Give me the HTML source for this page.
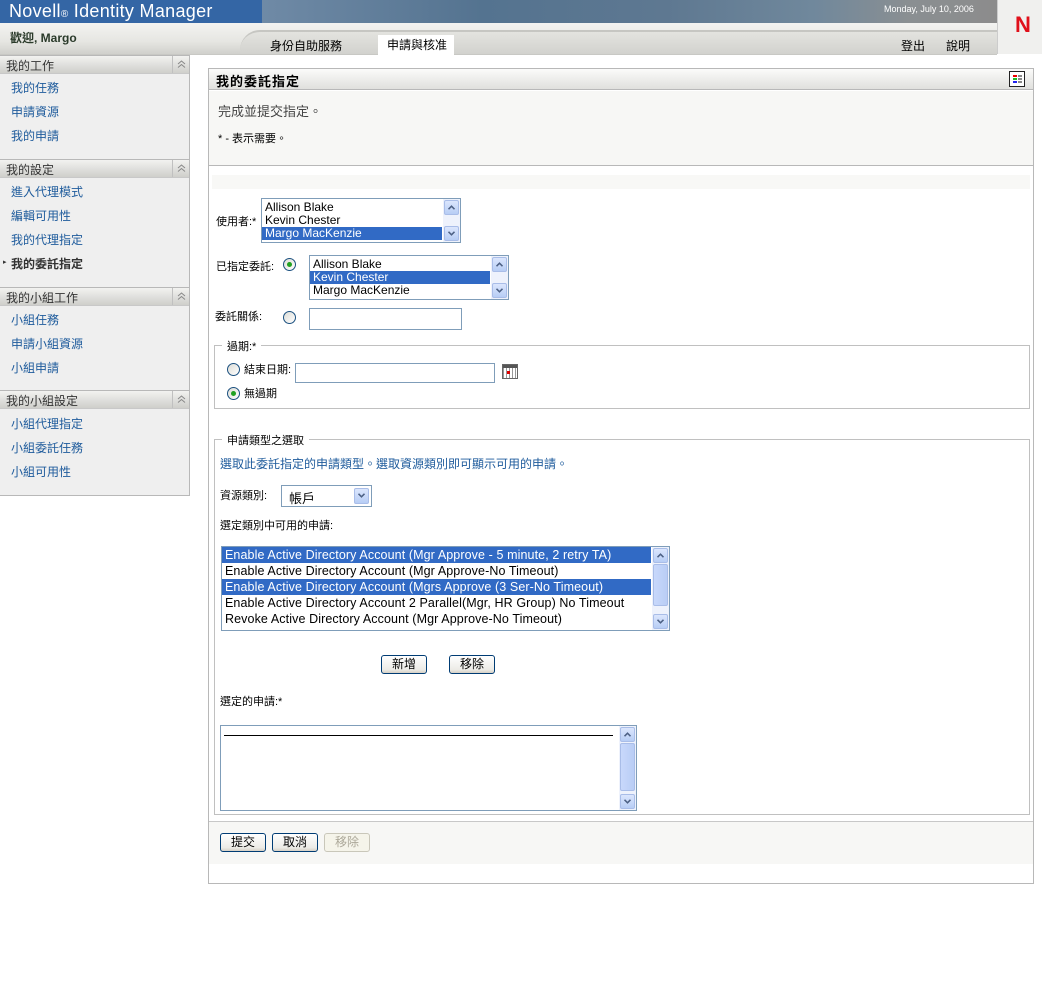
<!DOCTYPE html>
<html><head><meta charset="utf-8">
<style>
*{box-sizing:border-box;margin:0;padding:0}
body{width:1042px;height:1002px;background:#fff;position:relative;overflow:hidden;font-family:"Liberation Sans","Noto Sans CJK TC",sans-serif;font-size:12px;color:#000}
.a{position:absolute}
.sh{position:absolute;left:0;width:189px;height:19px;background:linear-gradient(#f2f2f0,#cfcfcb);border-top:1px solid #b8b8b8;border-bottom:1px solid #c8c8c8;font-size:12px;color:#333;padding:1px 0 0 6px}
.sh .c{position:absolute;right:0;top:0;width:17px;height:17px;border-left:1px solid #c0c0c0}
.si{position:absolute;left:11px;color:#1e5b9c;font-size:12px}
.lb{position:absolute;background:#fff;border:1px solid #7f9db9;overflow:hidden;font-size:12px}
.lb .r{height:13px;line-height:13px;padding-left:3px;white-space:nowrap}
.sel{background:#316ac5;color:#fff}
.sb{position:absolute;right:0;top:0;bottom:0;width:17px;background:#eef2fc}
.ar{position:absolute;left:1px;width:15px;height:15px;background:linear-gradient(#dbe6fd,#b7cdf5);border:1px solid #a9bde8;border-radius:2px}
.ar svg{position:absolute;left:3px;top:4px}
.th{position:absolute;left:1px;width:15px;background:linear-gradient(90deg,#c8d8fb,#b9cdf5);border:1px solid #a9bde8;border-radius:2px}
.rad{position:absolute;width:13px;height:13px;border-radius:50%;border:1px solid #1c5180;background:linear-gradient(135deg,#dcdcd6,#fff)}
.rad.on::after{content:"";position:absolute;left:3px;top:3px;width:5px;height:5px;border-radius:50%;background:#21a121}
.inp{position:absolute;border:1px solid #7f9db9;background:#fff}
.btn{position:absolute;height:19px;border:1px solid #003c74;border-radius:3px;background:linear-gradient(#fff,#ecebe6 80%,#d6d0c5);font-size:12px;text-align:center;line-height:17px}
.lg{position:absolute;background:#fff;padding:0 5px;font-size:11px}
</style></head><body>
<svg width="0" height="0" style="position:absolute">
<defs>
<symbol id="up" viewBox="0 0 7 5"><path d="M0.5 4.2 L3.5 1.2 L6.5 4.2" fill="none" stroke="#4d6185" stroke-width="1.6"/></symbol>
<symbol id="dn" viewBox="0 0 7 5"><path d="M0.5 0.8 L3.5 3.8 L6.5 0.8" fill="none" stroke="#4d6185" stroke-width="1.6"/></symbol>
<symbol id="dup" viewBox="0 0 9 8"><path d="M1 4 L4.5 1 L8 4 M1 7.5 L4.5 4.5 L8 7.5" fill="none" stroke="#888" stroke-width="1"/></symbol>
</defs></svg>

<!-- header -->
<div class="a" style="left:0;top:0;width:262px;height:23px;background:#3466a5"></div>
<div class="a" style="left:262px;top:0;width:735px;height:23px;background:linear-gradient(90deg,#6f8aa6 0%,#547390 30%,#5e7891 55%,#70889c 75%,#8a8f92 88%,#8c8c8c 100%)"></div>
<div class="a" style="left:9px;top:1px;color:#fff;font-size:18px;letter-spacing:.3px">Novell<span style="font-size:10px">®</span> Identity Manager</div>
<div class="a" style="left:884px;top:4px;color:#fff;font-size:9px">Monday, July 10, 2006</div>
<div class="a" style="left:997px;top:0;width:45px;height:54px;background:#f0f0ee;border-left:1px solid #ccc"></div>
<div class="a" style="left:1015px;top:12px;color:#e0101a;font-size:22px;font-weight:bold">N</div>
<div class="a" style="left:0;top:23px;width:997px;height:31px;background:linear-gradient(#f3f3f1,#e6e6e2 60%,#d0d0cc)"></div>
<div class="a" style="left:240px;top:30px;width:757px;height:24px;background:linear-gradient(#e3e3df,#d2d2ce);border-top:2px solid #c6c6c2;border-radius:20px 0 0 0"></div>
<div class="a" style="left:0;top:54px;width:997px;height:1px;background:#c8c8c4"></div>
<div class="a" style="left:10px;top:29px;font-weight:bold;color:#2a3a2a;font-size:12px">歡迎, Margo</div>
<div class="a" style="left:270px;top:37px;font-size:12px">身份自助服務</div>
<div class="a" style="left:378px;top:35px;width:76px;height:20px;background:#fff"></div>
<div class="a" style="left:387px;top:36px;font-size:12px">申請與核准</div>
<div class="a" style="left:901px;top:37px;font-size:12px">登出</div>
<div class="a" style="left:946px;top:37px;font-size:12px">說明</div>

<!-- sidebar -->
<div class="a" style="left:0;top:55px;width:190px;height:441px;background:#efefef;border-right:1px solid #b8b8b8;border-bottom:1px solid #b8b8b8"></div>
<div class="sh" style="top:55px">我的工作<span class="c"><svg class="a" style="left:4px;top:4px" width="9" height="8"><use href="#dup"/></svg></span></div>
<div class="si" style="top:79px">我的任務</div>
<div class="si" style="top:103px">申請資源</div>
<div class="si" style="top:127px">我的申請</div>
<div class="sh" style="top:159px">我的設定<span class="c"><svg class="a" style="left:4px;top:4px" width="9" height="8"><use href="#dup"/></svg></span></div>
<div class="si" style="top:183px">進入代理模式</div>
<div class="si" style="top:207px">編輯可用性</div>
<div class="si" style="top:231px">我的代理指定</div>
<div class="si" style="top:255px;color:#333;font-weight:bold"><span style="position:absolute;left:-8px;font-size:7px;top:3px;font-weight:normal">▸</span>我的委託指定</div>
<div class="sh" style="top:287px">我的小組工作<span class="c"><svg class="a" style="left:4px;top:4px" width="9" height="8"><use href="#dup"/></svg></span></div>
<div class="si" style="top:311px">小組任務</div>
<div class="si" style="top:335px">申請小組資源</div>
<div class="si" style="top:359px">小組申請</div>
<div class="sh" style="top:390px">我的小組設定<span class="c"><svg class="a" style="left:4px;top:4px" width="9" height="8"><use href="#dup"/></svg></span></div>
<div class="si" style="top:415px">小組代理指定</div>
<div class="si" style="top:439px">小組委託任務</div>
<div class="si" style="top:463px">小組可用性</div>

<!-- main panel -->
<div class="a" style="left:208px;top:68px;width:826px;height:816px;border:1px solid #b8b8b8;background:#fff"></div>
<div class="a" style="left:209px;top:69px;width:824px;height:21px;background:linear-gradient(#fbfbfa,#e0e0dd);border-bottom:1px solid #b8b8b8"></div>
<div class="a" style="left:216px;top:71px;font-weight:bold;font-size:13px;letter-spacing:1px">我的委託指定</div>
<div class="a" style="left:1009px;top:71px;width:16px;height:16px;border:1px solid #222;background:#fff">
 <div class="a" style="left:3px;top:3px;width:4px;height:2px;background:#e00"></div><div class="a" style="left:8px;top:3px;width:4px;height:2px;background:#888"></div>
 <div class="a" style="left:3px;top:6px;width:4px;height:2px;background:#2b2"></div><div class="a" style="left:8px;top:6px;width:4px;height:2px;background:#888"></div>
 <div class="a" style="left:3px;top:9px;width:4px;height:2px;background:#22e"></div><div class="a" style="left:8px;top:9px;width:4px;height:2px;background:#888"></div>
</div>
<div class="a" style="left:209px;top:91px;width:824px;height:75px;background:#f7f7f5;border-bottom:1px solid #b8b8b8"></div>
<div class="a" style="left:218px;top:101px;font-size:13px;color:#444">完成並提交指定。</div>
<div class="a" style="left:218px;top:130px;font-size:11px">* - 表示需要。</div>
<div class="a" style="left:212px;top:175px;width:818px;height:14px;background:#f8f8f6"></div>

<!-- users -->
<div class="a" style="left:216px;top:213px;font-size:11px">使用者:*</div>
<div class="lb" style="left:261px;top:198px;width:200px;height:45px">
 <div class="r" style="margin-top:2px">Allison Blake</div><div class="r">Kevin Chester</div><div class="r sel" style="margin-right:18px">Margo MacKenzie</div>
 <div class="sb"><div class="ar" style="top:1px"><svg width="7" height="5"><use href="#up"/></svg></div><div class="ar" style="bottom:1px"><svg width="7" height="5"><use href="#dn"/></svg></div></div>
</div>
<div class="a" style="left:216px;top:258px;font-size:11px">已指定委託:</div>
<div class="rad on" style="left:283px;top:258px"></div>
<div class="lb" style="left:309px;top:255px;width:200px;height:45px">
 <div class="r" style="margin-top:2px">Allison Blake</div><div class="r sel" style="margin-right:18px">Kevin Chester</div><div class="r">Margo MacKenzie</div>
 <div class="sb"><div class="ar" style="top:1px"><svg width="7" height="5"><use href="#up"/></svg></div><div class="ar" style="bottom:1px"><svg width="7" height="5"><use href="#dn"/></svg></div></div>
</div>
<div class="a" style="left:215px;top:308px;font-size:11px">委託關係:</div>
<div class="rad" style="left:283px;top:311px"></div>
<div class="inp" style="left:309px;top:308px;width:153px;height:22px"></div>

<!-- expiry -->
<div class="a" style="left:214px;top:345px;width:816px;height:64px;border:1px solid #c0c0c0"></div>
<div class="lg" style="left:222px;top:338px">過期:*</div>
<div class="rad" style="left:227px;top:363px"></div>
<div class="a" style="left:244px;top:361px;font-size:11px">結束日期:</div>
<div class="inp" style="left:295px;top:363px;width:200px;height:20px"></div>
<div class="a" style="left:502px;top:364px;width:16px;height:15px;border:1px solid #666;background:repeating-linear-gradient(90deg,#999 0 1px,#fff 1px 3px),#fff">
 <div class="a" style="left:0;top:0;width:14px;height:3px;background:#555"></div>
 <div class="a" style="left:4px;top:6px;width:3px;height:3px;background:#d00"></div></div>
<div class="rad on" style="left:227px;top:387px"></div>
<div class="a" style="left:244px;top:385px;font-size:11px">無過期</div>

<!-- request types -->
<div class="a" style="left:214px;top:439px;width:816px;height:376px;border:1px solid #c0c0c0"></div>
<div class="lg" style="left:222px;top:432px">申請類型之選取</div>
<div class="a" style="left:220px;top:455px;color:#1e5b9c;font-size:12px">選取此委託指定的申請類型。選取資源類別即可顯示可用的申請。</div>
<div class="a" style="left:220px;top:487px;font-size:11px">資源類別:</div>
<div class="inp" style="left:281px;top:485px;width:91px;height:22px"><span class="a" style="left:7px;top:2px;font-size:13px">帳戶</span>
 <div class="ar" style="left:72px;top:2px;height:16px"><svg width="7" height="5"><use href="#dn"/></svg></div></div>
<div class="a" style="left:220px;top:517px;font-size:11px">選定類別中可用的申請:</div>
<div class="lb" style="left:221px;top:546px;width:449px;height:85px;font-size:12.5px;letter-spacing:.1px">
 <div class="r sel" style="height:16px;line-height:16px;margin-right:18px">Enable Active Directory Account (Mgr Approve - 5 minute, 2 retry TA)</div>
 <div class="r" style="height:16px;line-height:16px">Enable Active Directory Account (Mgr Approve-No Timeout)</div>
 <div class="r sel" style="height:16px;line-height:16px;margin-right:18px">Enable Active Directory Account (Mgrs Approve (3 Ser-No Timeout)</div>
 <div class="r" style="height:16px;line-height:16px">Enable Active Directory Account 2 Parallel(Mgr, HR Group) No Timeout</div>
 <div class="r" style="height:16px;line-height:16px">Revoke Active Directory Account (Mgr Approve-No Timeout)</div>
 <div class="sb"><div class="ar" style="top:1px"><svg width="7" height="5"><use href="#up"/></svg></div><div class="th" style="top:17px;height:42px"></div><div class="ar" style="bottom:1px"><svg width="7" height="5"><use href="#dn"/></svg></div></div>
</div>
<div class="btn" style="left:381px;top:655px;width:46px">新增</div>
<div class="btn" style="left:449px;top:655px;width:46px">移除</div>
<div class="a" style="left:220px;top:693px;font-size:11px">選定的申請:*</div>
<div class="lb" style="left:220px;top:725px;width:417px;height:86px">
 <div class="a" style="left:3px;top:9px;width:389px;height:1px;background:#000"></div>
 <div class="sb"><div class="ar" style="top:1px"><svg width="7" height="5"><use href="#up"/></svg></div><div class="th" style="top:17px;height:48px"></div><div class="ar" style="bottom:1px"><svg width="7" height="5"><use href="#dn"/></svg></div></div>
</div>

<!-- footer buttons -->
<div class="a" style="left:209px;top:821px;width:824px;height:1px;background:#c8c8c8"></div>
<div class="a" style="left:209px;top:822px;width:824px;height:42px;background:#f7f7f5"></div>
<div class="btn" style="left:220px;top:833px;width:46px">提交</div>
<div class="btn" style="left:272px;top:833px;width:46px">取消</div>
<div class="btn" style="left:324px;top:833px;width:46px;border-color:#c9c7ba;color:#aca899;background:#f5f4ea">移除</div>
</body></html>
